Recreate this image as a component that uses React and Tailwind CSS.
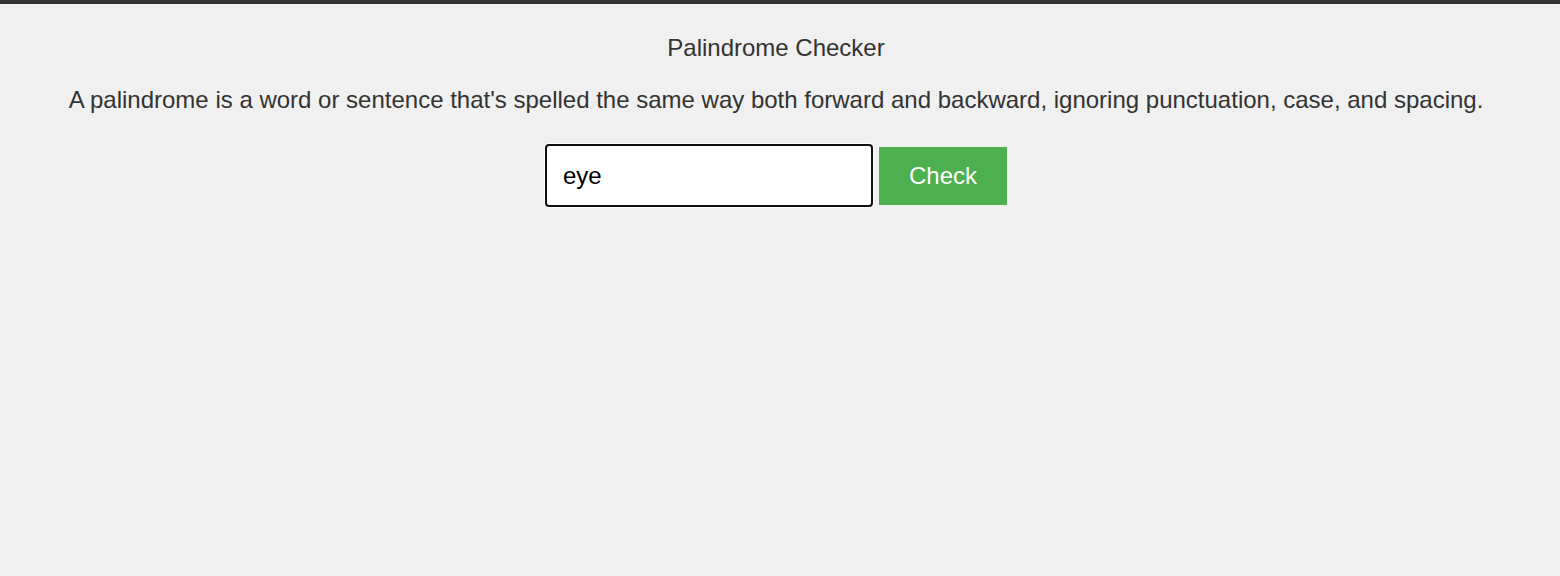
export default function App() {
  return (
    <div className="min-h-screen bg-[#f0f0f0] text-[#333] font-['Liberation_Sans',Arial,sans-serif]">
      <div className="h-1 bg-[#333]" />
      <div className="flex flex-col items-center pt-[30px] pr-[8px] text-[24px] leading-[1.15]">
        <h1 className="font-normal">Palindrome Checker</h1>
        <p className="mt-[24px]">
          A palindrome is a word or sentence that's spelled the same way both forward and backward, ignoring punctuation, case, and spacing.
        </p>
        <div className="mt-[31px] flex items-center gap-[6px]">
          <input
            type="text"
            defaultValue="eye"
            className="w-[328px] h-[63px] px-[16px] bg-white text-black text-[24px] border-2 border-[#101010] rounded-[4px] shadow-[0_0_0_1px_#ffffff] outline-none"
          />
          <button className="w-[128px] h-[58px] bg-[#4caf50] text-white text-[24px]">
            Check
          </button>
        </div>
      </div>
    </div>
  );
}
